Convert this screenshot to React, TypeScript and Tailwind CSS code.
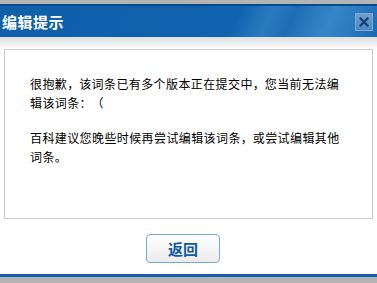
import React from 'react'

const cjk = { fontFamily: '"Noto Sans CJK SC", "Noto Sans", sans-serif' }

// full-width punctuation gets squeezed by the browser, keep it in a 1em cell
function Punct({ c }: { c: string }) {
  return <span className="inline-block w-[12px]">{c}</span>
}

export default function App() {
  return (
    <div className="w-[377px] h-[283px] overflow-hidden bg-white flex flex-col" style={cjk}>
      <div className="h-[4px] bg-[#b4b4b4]" />

      {/* title bar */}
      <div className="h-[33px] border-t-2 border-[#0b4a8a] bg-[#1063ae] bg-[linear-gradient(115deg,#0f5fab_0%,#1063ae_62%,#2a7cc0_70%,#1d6db5_76%,#3587c8_86%,#1a6ab3_100%)] flex items-center justify-between pl-[2px] pr-[4px]">
        <span className="text-white font-bold text-[15px] leading-none tracking-[0.5px]">编辑提示</span>
        <button className="w-[18px] h-[18px] border border-[#7fa8d2] bg-[linear-gradient(#6f9fcf,#4f86be)] flex items-center justify-center">
          <svg viewBox="0 0 10 10" className="w-[10px] h-[10px]">
            <path d="M1.5 1.5L8.5 8.5M8.5 1.5L1.5 8.5" stroke="#143f73" strokeWidth="2.2" strokeLinecap="square" />
          </svg>
        </button>
      </div>

      {/* body */}
      <div className="h-[12px] bg-[linear-gradient(#dedede,#ffffff)]" />
      <div className="mx-[4px] h-[170px] border border-[#cccccc] pt-[24px] pl-[25px]">
        <div className="text-[12px] leading-[19px] tracking-[0.4px] text-black whitespace-nowrap">
          <p>
            很抱歉<Punct c="，" />该词条已有多个版本正在提交中<Punct c="，" />您当前无法编
            <br />
            辑该词条<Punct c="：" /><Punct c="（" />
          </p>
          <p className="mt-[16px]">
            百科建议您晚些时候再尝试编辑该词条<Punct c="，" />或尝试编辑其他
            <br />
            词条<Punct c="。" />
          </p>
        </div>
      </div>

      <div className="h-[15px]" />
      <div className="flex justify-center">
        <button className="mr-[11px] w-[74px] h-[29px] rounded-[4px] border border-[#74a9d2] bg-[linear-gradient(#ffffff,#ececec)] text-[#0f5aa6] font-bold text-[15px] leading-none">
          返回
        </button>
      </div>
      <div className="h-[11px]" />
      <div className="h-[3px] bg-[#1361ac]" />
      <div className="flex-1 bg-[#b4b4b4]" />
    </div>
  )
}
